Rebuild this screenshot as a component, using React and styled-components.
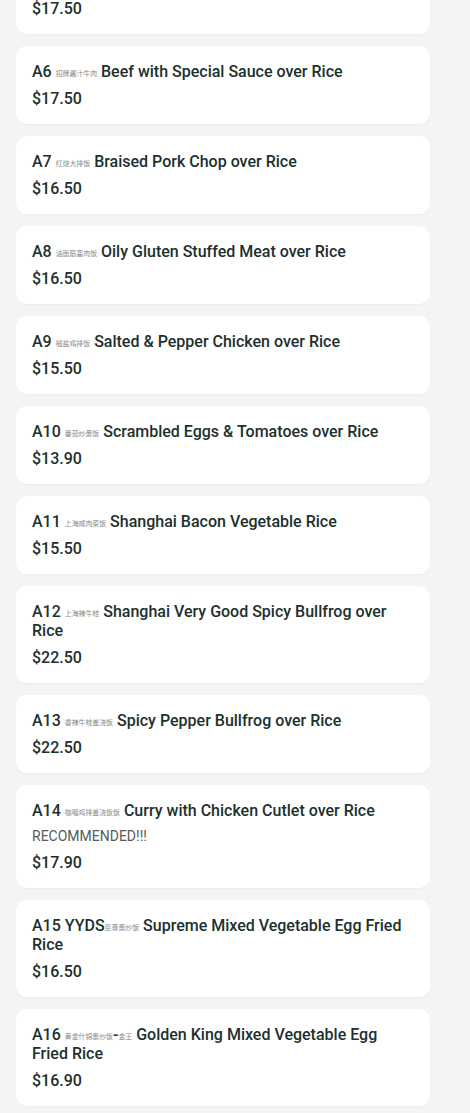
import React from "react";
import styled, { createGlobalStyle } from "styled-components";

const GlobalStyle = createGlobalStyle`
  html, body {
    margin: 0;
    padding: 0;
    background: #f4f4f4;
  }
  body {
    font-family: Roboto, "Noto Sans", "Noto Sans CJK SC", sans-serif;
    -webkit-font-smoothing: antialiased;
  }
`;

const Page = styled.div`
  width: 470px;
  min-height: 1113px;
  overflow: hidden;
  background: #f4f4f4;
`;

const List = styled.ul`
  list-style: none;
  margin: -44px 0 0;
  padding: 0 40px 8px 16px;
  display: flex;
  flex-direction: column;
  gap: 12px;
`;

const Card = styled.li`
  background: #ffffff;
  border-radius: 11px;
  padding: 16px;
  display: flex;
  flex-direction: column;
  gap: 8px;
  box-shadow: 0 1px 2px rgba(0, 0, 0, 0.04);
`;

const Title = styled.div`
  font-size: 16px;
  line-height: 19px;
  font-weight: 500;
  color: #1c302d;
`;

// Chinese names: the reference draws them as narrow placeholder boxes,
// so they are set small to keep the same line widths and wraps.
const Chinese = styled.span`
  display: inline-block;
  font-family: "Noto Sans CJK SC", sans-serif;
  font-size: 6.9px;
  line-height: 1;
  font-weight: 400;
  color: #858b8a;
  vertical-align: 1px;
`;

const Note = styled.div`
  font-size: 14px;
  line-height: 17px;
  color: #555b5a;
`;

const Price = styled.div`
  font-size: 16px;
  line-height: 19px;
  font-weight: 500;
  color: #1c302d;
`;

const items = [
  { code: "A5", zh: "葱油鸡腿饭", en: "Scallion Oil Chicken over Rice", price: "$17.50" },
  { code: "A6", zh: "招牌酱汁牛肉", en: "Beef with Special Sauce over Rice", price: "$17.50" },
  { code: "A7", zh: "红烧大排饭", en: "Braised Pork Chop over Rice", price: "$16.50" },
  { code: "A8", zh: "油面筋塞肉饭", en: "Oily Gluten Stuffed Meat over Rice", price: "$16.50" },
  { code: "A9", zh: "椒盐鸡排饭", en: "Salted & Pepper Chicken over Rice", price: "$15.50" },
  { code: "A10", zh: "番茄炒蛋饭", en: "Scrambled Eggs & Tomatoes over Rice", price: "$13.90" },
  { code: "A11", zh: "上海咸肉菜饭", en: "Shanghai Bacon Vegetable Rice", price: "$15.50" },
  { code: "A12", zh: "上海辣牛蛙", en: "Shanghai Very Good Spicy Bullfrog over Rice", price: "$22.50" },
  { code: "A13", zh: "香辣牛蛙盖浇饭", en: "Spicy Pepper Bullfrog over Rice", price: "$22.50" },
  {
    code: "A14",
    zh: "咖喱鸡排盖浇饭饭",
    en: "Curry with Chicken Cutlet over Rice",
    note: "RECOMMENDED!!!",
    price: "$17.90",
  },
  { code: "A15", prefix: "YYDS", zh: "至尊蛋炒饭", en: "Supreme Mixed Vegetable Egg Fried Rice", price: "$16.50" },
  {
    code: "A16",
    zh: "黄金什锦蛋炒饭",
    tail: "金王",
    en: "Golden King Mixed Vegetable Egg Fried Rice",
    price: "$16.90",
  },
];

const MenuItem = ({ item }) => (
  <Card>
    <Title>
      {item.code} {item.prefix}
      <Chinese>{item.zh}</Chinese>
      {item.tail ? (
        <>
          -<Chinese>{item.tail}</Chinese>
        </>
      ) : null}{" "}
      {item.en}
    </Title>
    {item.note ? <Note>{item.note}</Note> : null}
    <Price>{item.price}</Price>
  </Card>
);

const App = () => (
  <>
    <GlobalStyle />
    <Page>
      <List>
        {items.map((item) => (
          <MenuItem key={item.code} item={item} />
        ))}
      </List>
    </Page>
  </>
);

export default App;
